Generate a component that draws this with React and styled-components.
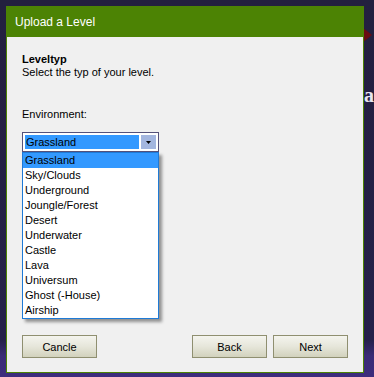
import React from 'react'
import styled, { createGlobalStyle } from 'styled-components'

const environments = [
  'Grassland',
  'Sky/Clouds',
  'Underground',
  'Joungle/Forest',
  'Desert',
  'Underwater',
  'Castle',
  'Lava',
  'Universum',
  'Ghost (-House)',
  'Airship',
]

const GlobalStyle = createGlobalStyle`
  html, body {
    margin: 0;
    padding: 0;
  }
  body {
    width: 374px;
    height: 377px;
    overflow: hidden;
    font-family: "Liberation Sans", Arial, sans-serif;
    background: linear-gradient(to bottom, #23203f 0px, #25214a 340px, #3a2b76 356px, #3d2c7c 377px);
  }
`

export default function App() {
  return (
    <>
      <GlobalStyle />
      <Desktop>
        <RedShape />
        <BgLetter>a</BgLetter>
        <Dialog>
          <TitleBar>Upload a Level</TitleBar>
          <Body>
            <Heading>Leveltyp</Heading>
            <Text>Select the typ of your level.</Text>
            <Label>Environment:</Label>
            <ComboWrap>
              <Combo>
                <ComboValue>Grassland</ComboValue>
                <ComboButton>
                  <svg width="5" height="3" viewBox="0 0 5 3">
                    <path d="M0 0h5L2.5 3z" fill="#000" />
                  </svg>
                </ComboButton>
              </Combo>
              <List>
                {environments.map((env, i) => (
                  <Item key={env} $selected={i === 0}>{env}</Item>
                ))}
              </List>
            </ComboWrap>
            <Buttons>
              <Button>Cancle</Button>
              <Right>
                <Button>Back</Button>
                <Button>Next</Button>
              </Right>
            </Buttons>
          </Body>
        </Dialog>
      </Desktop>
    </>
  )
}

const Desktop = styled.div`
  position: relative;
  width: 374px;
  height: 377px;
  padding: 6px 0 0 6px;
  box-sizing: border-box;
`

const RedShape = styled.div`
  position: absolute;
  left: 362px;
  top: 27px;
  width: 0;
  height: 0;
  border-top: 8px solid transparent;
  border-bottom: 8px solid transparent;
  border-left: 10px solid #6a0c12;
`

const BgLetter = styled.div`
  position: absolute;
  left: 364px;
  top: 84px;
  font-family: "Liberation Serif", serif;
  font-weight: 700;
  font-size: 20px;
  color: #e8e6f0;
`

const Dialog = styled.div`
  position: relative;
  width: 358px;
  height: 367px;
  box-sizing: border-box;
  border: 1px solid #4c8304;
  background: #f0f0f0;
  display: flex;
  flex-direction: column;
`

const TitleBar = styled.div`
  height: 30px;
  background: #4c8304;
  color: #ffffff;
  font-size: 12px;
  display: flex;
  align-items: center;
  padding: 0 0 1px 8px;
  box-sizing: border-box;
`

const Body = styled.div`
  flex: 1;
  display: flex;
  flex-direction: column;
  padding: 16px 15px 14px 15px;
  font-size: 11px;
  line-height: 13px;
  color: #000;
`

const Heading = styled.div`
  font-weight: 700;
`

const Text = styled.div``

const Label = styled.div`
  margin-top: 29px;
`

const ComboWrap = styled.div`
  position: relative;
  margin-top: 11px;
  width: 137px;
`

const Combo = styled.div`
  height: 20px;
  box-sizing: border-box;
  border: 1px solid #55527a;
  background: #ffffff;
  padding: 2px;
  display: flex;
  gap: 2px;
`

const ComboValue = styled.div`
  flex: 1;
  background: #3399ff;
  color: #000;
  padding-left: 1px;
  line-height: 14px;
`

const ComboButton = styled.div`
  width: 15px;
  background: #a3b6df;
  display: flex;
  align-items: center;
  justify-content: center;
`

const List = styled.div`
  position: absolute;
  left: 0;
  top: 20px;
  width: 137px;
  box-sizing: border-box;
  border: 1px solid #1e7ad6;
  background: #ffffff;
  box-shadow: 3px 3px 3px rgba(0, 0, 0, 0.4);
  z-index: 2;
`

const Item = styled.div`
  height: 15px;
  line-height: 15px;
  padding-left: 2px;
  background: ${p => (p.$selected ? '#3399ff' : 'transparent')};
  color: #000;
`

const Buttons = styled.div`
  margin-top: auto;
  display: flex;
  justify-content: space-between;
`

const Right = styled.div`
  display: flex;
  gap: 6px;
`

const Button = styled.button`
  width: 75px;
  height: 23px;
  box-sizing: border-box;
  border: 1px solid #8f8f70;
  background: linear-gradient(to bottom, #f4f4ee 0%, #e6e6da 50%, #d2d2bd 100%);
  font-family: "Liberation Sans", Arial, sans-serif;
  font-size: 11px;
  color: #000;
  padding: 0;
  cursor: pointer;
`
